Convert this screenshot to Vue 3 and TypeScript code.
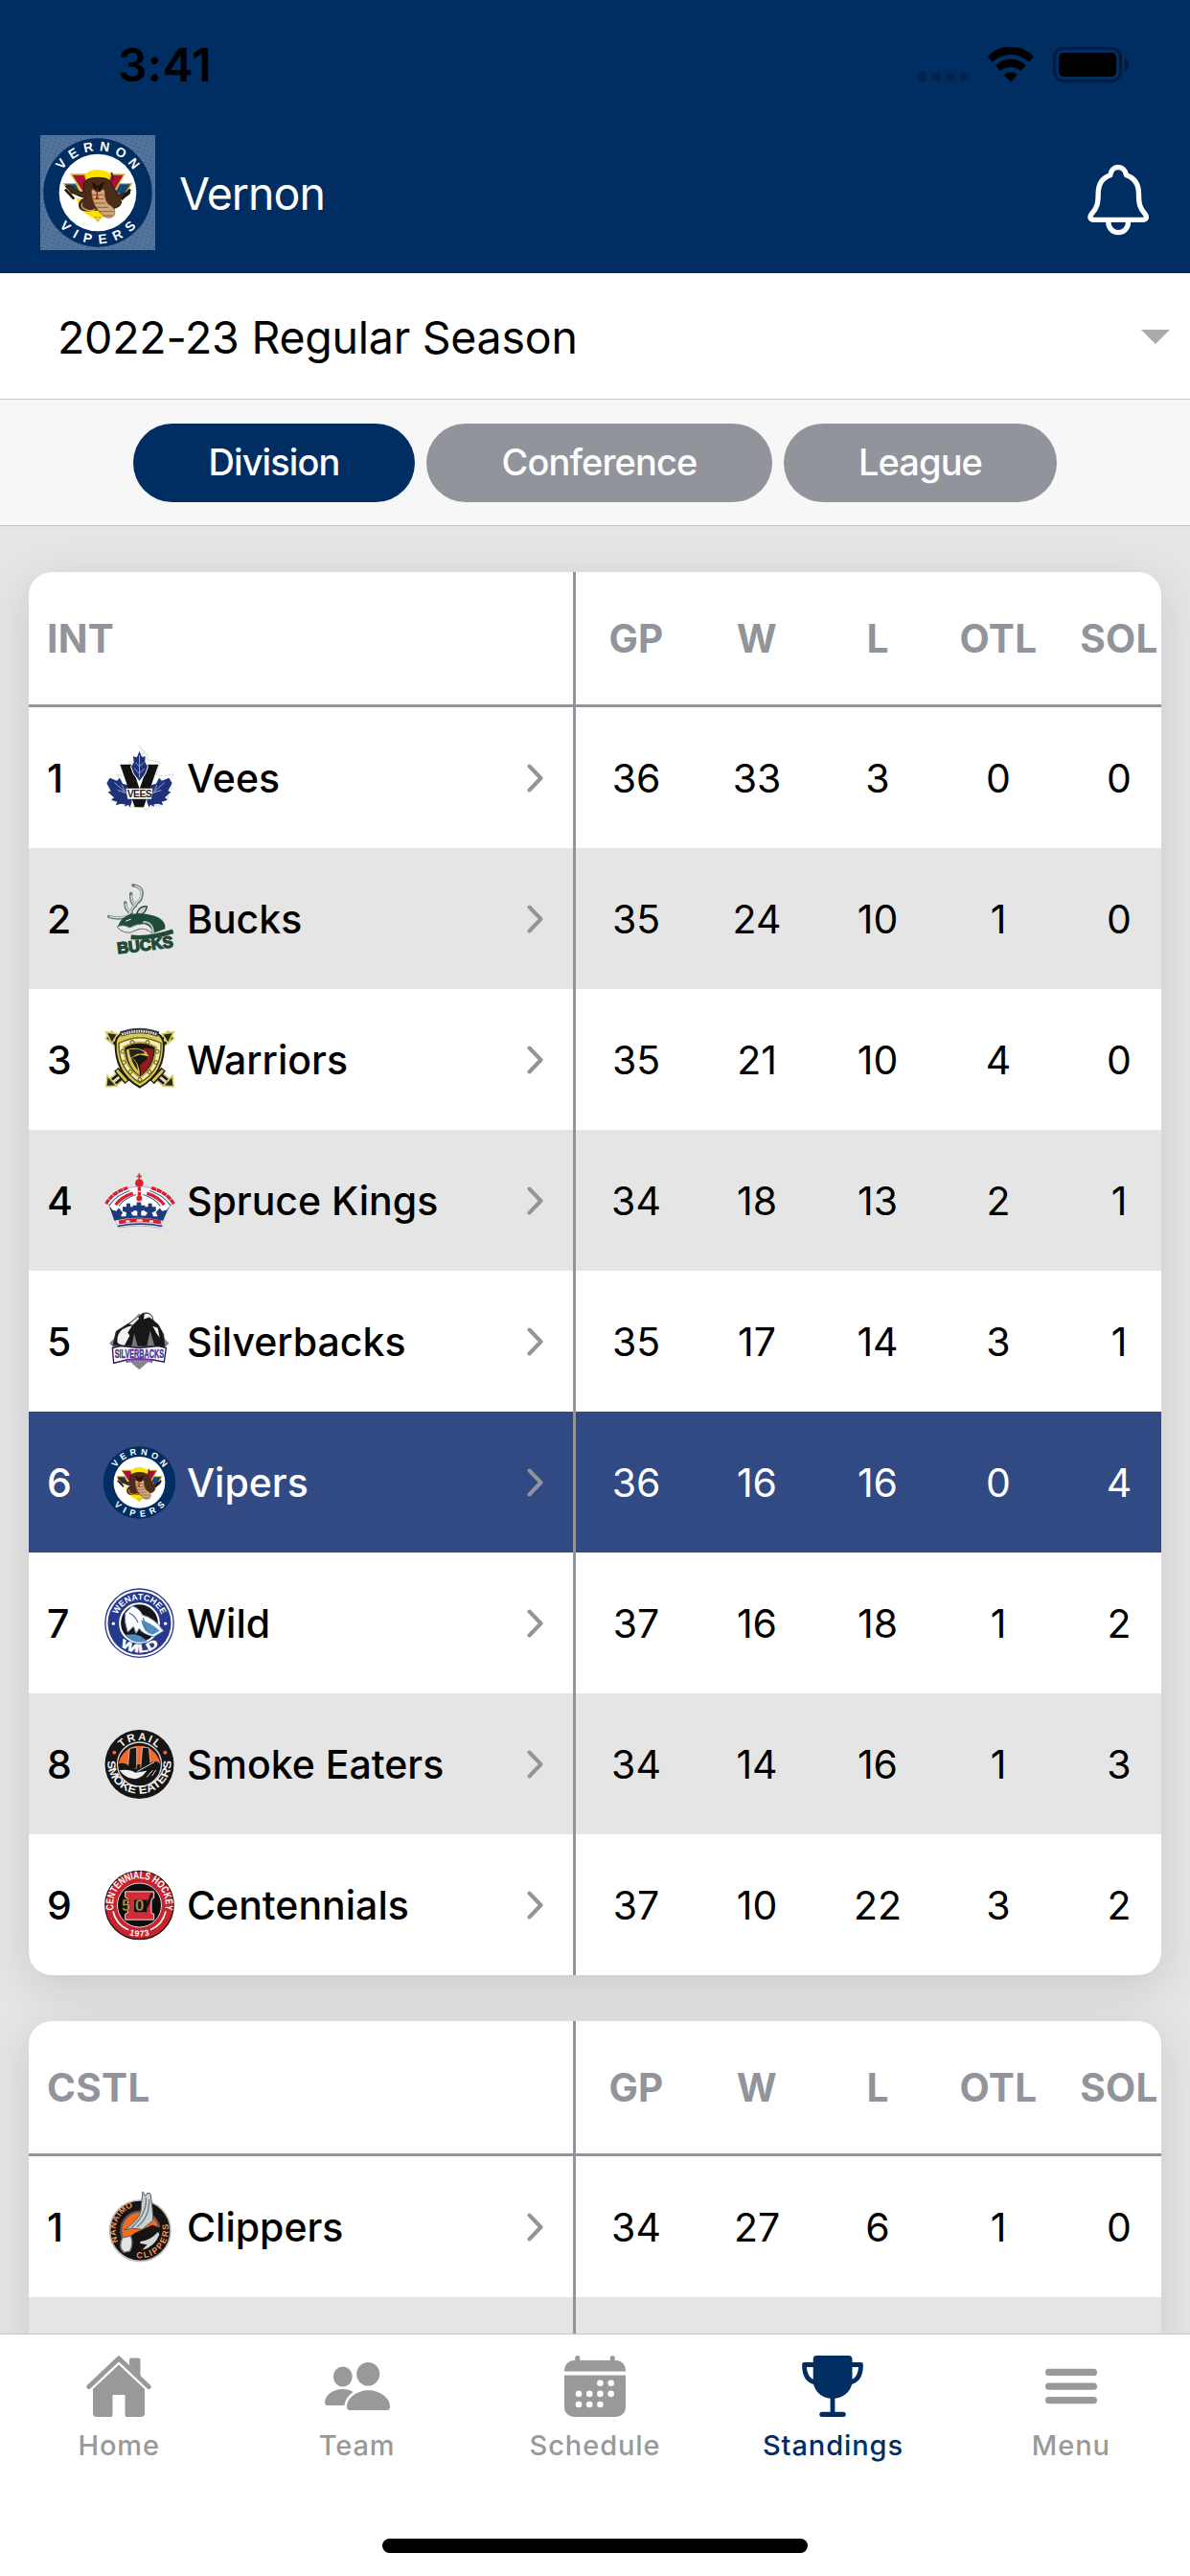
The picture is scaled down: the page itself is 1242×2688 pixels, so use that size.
<script setup lang="ts">
interface Team {
  name: string
  view: string
  stats: number[]
}
interface Division {
  code: string
  teams: Team[]
}

const columns = ['GP', 'W', 'L', 'OTL', 'SOL']
const scopes = ['Division', 'Conference', 'League']
const activeScope = 'Division'
const favourite = 'Vipers'

// `view` is the viewBox of the team's crest artwork.
const divisions: Division[] = [
  {
    code: 'INT',
    teams: [
      { name: 'Vees', view: '51 67.5 234 234', stats: [36, 33, 3, 0, 0] },
      { name: 'Bucks', view: '51 508.5 234 234', stats: [35, 24, 10, 1, 0] },
      { name: 'Warriors', view: '51 949.5 234 234', stats: [35, 21, 10, 4, 0] },
      { name: 'Spruce Kings', view: '51 130.5 234 234', stats: [34, 18, 13, 2, 1] },
      { name: 'Silverbacks', view: '51 571.5 234 234', stats: [35, 17, 14, 3, 1] },
      { name: 'Vipers', view: '43 37.8 350.8 350.8', stats: [36, 16, 16, 0, 4] },
      { name: 'Wild', view: '51 163.5 234 234', stats: [37, 16, 18, 1, 2] },
      { name: 'Smoke Eaters', view: '51 604.5 234 234', stats: [34, 14, 16, 1, 3] },
      { name: 'Centennials', view: '51 1045.5 234 234', stats: [37, 10, 22, 3, 2] },
    ],
  },
  {
    code: 'CSTL',
    teams: [{ name: 'Clippers', view: '0 0 234 234', stats: [34, 27, 6, 1, 0] }],
  },
]
const tabs = ['Home', 'Team', 'Schedule', 'Standings', 'Menu']
</script>

<template>
  <div class="screen">
    <header class="top">
      <div class="status">
        <span class="clock">3:41</span>
        <div class="status-icons">
          <svg class="signal" width="55" height="10" viewBox="0 0 55 10" fill="#00244e"><rect v-for="n in 4" :key="n" :x="(n - 1) * 15" width="10" height="10" rx="3" /></svg>
          <svg class="wifi" width="48" height="36" viewBox="395 87 144 108">
            <path d="M395 117A98 98 0 0 1 538 117L524 133A86 86 0 0 0 409 133ZM420 145A64 64 0 0 1 513 145L499 161A50 50 0 0 0 434 161ZM446 174A30 30 0 0 1 487 174L466.500 195Z" stroke="#000" stroke-width="1" stroke-linejoin="round" />
          </svg>
          <svg class="battery" width="80" height="37" viewBox="0 0 80 37">
            <rect x="1.500" y="1.500" width="69" height="34" rx="9.500" fill="none" stroke="#001b3c" stroke-width="3" />
            <rect x="6" y="6" width="60" height="25" rx="5" />
            <path d="M75 11.500q4 2 4 7t-4 7z" fill="#001b3c" />
          </svg>
        </div>
      </div>
      <div class="toolbar">
        <svg class="brand" width="120" height="120" viewBox="0 0 120 120">
          <defs>
            <pattern id="mesh" width="5" height="4" patternUnits="userSpaceOnUse" patternTransform="rotate(20)">
              <rect width="5" height="4" fill="#54749c" />
              <ellipse cx="1.500" cy="1.500" rx="1.300" ry=".8" fill="#3d5e88" />
            </pattern>
          </defs>
          <rect width="120" height="120" fill="url(#mesh)" />
          <use href="#snake" transform="translate(3.300 3.300) scale(.3335) translate(-46 -43)" />
        </svg>
        <h1 class="title">Vernon</h1>
        <svg class="bell" width="64" height="75" viewBox="704.500 451 192 225" fill="none" stroke="#fff" stroke-width="16" stroke-linejoin="round">
          <path d="M776 486C778 470 788 461.500 800 461.500S823 470 826 486C850 494 865 513 865 545C865 575 868 590 884 607C893 618 888 626 878 626H724C714 626 709 618 718 607C734 590 738 575 738 545C738 513 752 494 776 486Z" />
          <path d="M770 626V635A31 31 0 0 0 832 635V626" />
        </svg>
      </div>
    </header>

    <div class="season">
      <span>2022-23 Regular Season</span>
      <i class="caret"></i>
    </div>

    <nav class="scopes">
      <button v-for="s in scopes" :key="s" class="pill" :class="[s.toLowerCase(), { active: s === activeScope }]">{{ s }}</button>
    </nav>

    <main class="content">
      <section v-for="d in divisions" :key="d.code" class="card">
        <div class="row head">
          <div class="team">{{ d.code }}</div>
          <div v-for="c in columns" :key="c" class="cell">{{ c }}</div>
        </div>
        <div v-for="(t, i) in d.teams" :key="t.name" class="row" :class="{ odd: i % 2 === 1, fav: t.name === favourite }">
          <div class="team">
            <span class="rank">{{ i + 1 }}</span>
            <svg class="logo" width="78" height="78" :viewBox="t.view">
              <g v-if="t.name === 'Vees'">
                <path d="M166 84l12 20 14 6-2 16 40 8-10 40 18 4 36-6-14 26 8 18-16 12 6 18-26 6 4 22-24-6-24 16-24-14-28 6 4-22-24-8 6-16-18-14 8-16-16-26 36 4 14-4-12-38 40-8-4-16 14-8z" fill="#fff" stroke="#bdbdbd" stroke-width="2.500" stroke-dasharray="5 3" />
                <g id="vees-leaf" fill="#1f3178">
                  <path d="M74 184l22 9 9-9 9 18 16 4 8 26-8 36-22-3-16 4 5-10-19-6 9-8-19-17 9-4-13-24z" />
                  <path d="M126 246h18l-2 16-6 14-4-8-12 6z" />
                  <path d="M88 198l40 36M98 222l30 10M112 206l8 20" stroke="#94a0cb" stroke-width="3" />
                </g>
                <use href="#vees-leaf" transform="matrix(-1 0 0 1 333 0)" />
                <path d="M106 142h36l25 76 26-76h33l-46 133h-28z" fill="#111" />
                <path d="M166.500 97l9 20 11-3-1 20 8 14-9 24-18 23-18-23-9-24 8-12-2-22 12 4z" fill="#1f3178" stroke="#fff" stroke-width="3" />
                <path d="M166.500 112v70M166.500 148l-13-12M166.500 148l13-12M166.500 170l-16-16M166.500 170l16-16" stroke="#94a0cb" stroke-width="3" />
                <path d="M124 217h84l-4 33h-74z" fill="#fff" />
                <text class="ring" x="167" y="244" font-size="31" fill="#222" text-anchor="middle" textLength="78">VEES</text>
              </g>

              <g v-else-if="t.name === 'Bucks'">
                <g fill="none" stroke-linecap="round" stroke-linejoin="round">
                  <g id="antlers">
                    <path d="M71 618q36 10 62-2q12-30 36-50q18-40-22-46M122 574q2 28 20 32M140 546q-2 28 14 38" stroke="#5f746a" stroke-width="10" />
                    <path d="M74 618q34 8 58-4q14-30 36-50q14-36-14-42M123 578q4 22 18 26M141 552q0 20 12 30" stroke="#d3d7d5" stroke-width="5" />
                  </g>
                </g>
                <path d="M158 608q8-24 32-22q-2 18-20 26z" fill="#c8cecb" stroke="#1f4b38" stroke-width="4" />
                <path d="M98 650q10-30 42-40q52-6 88 12q22 14 19 34l-36 14q-6-26-30-22q-30 24-70 14z" fill="#1f4b38" />
                <path d="M96 650q18-10 40 2q22-12 46-12q26 8 26 32q-22-22-46-14l-24 10q-24 2-42-18z" fill="#e8eae9" stroke="#5f746a" stroke-width="3" />
                <path d="M178 634q34 0 32 40" fill="none" stroke="#c3cbc7" stroke-width="5" />
                <path d="M124 632l16-6" stroke="#fff" stroke-width="3" />
                <path d="M140 682q60 6 132-18" stroke="#1f4b38" stroke-width="14" fill="none" />
                <text class="ring heavy" x="184" y="724" font-size="50" fill="#1f4b38" stroke="#1f4b38" stroke-width="4" text-anchor="middle" textLength="176" lengthAdjust="spacingAndGlyphs" transform="rotate(-7 184 706)">BUCKS</text>
              </g>

              <g v-else-if="t.name === 'Warriors'">
                <g fill="none">
                  <path d="M68 986l182 150M268 986L84 1136" stroke="#d8ce66" stroke-width="34" />
                  <path d="M72 990l178 146M264 990L84 1136" stroke="#1c1a12" stroke-width="24" />
                  <path d="M78 994l172 142M258 994L84 1136" stroke="#d9d9d2" stroke-width="9" />
                  <path d="M94 1096l34 40M242 1096l-36 40" stroke="#1c1a12" stroke-width="18" />
                  <path d="M96 1099l30 34M240 1099l-32 34" stroke="#d8c850" stroke-width="9" />
                </g>
                <path d="M62 979l36 6-18 30zM274 979l-36 6 18 30zM62 1150l4-34 30 32zM274 1150l-4-34-30 32z" fill="#2c2918" stroke="#d8ce66" stroke-width="5" />
                <path d="M92 1010q6-26 34-32q42-12 84 0q26 8 32 32q8 96-74 142q-80-44-76-142z" fill="#d9ca55" stroke="#1c1a12" stroke-width="6" />
                <path d="M102 1014q66-34 132 0q4 84-66 124q-68-42-66-124z" fill="#f4efb6" stroke="#5d531b" stroke-width="4" />
                <path d="M118 1026q50-28 100 0q0 64-50 96q-50-34-50-96z" fill="#191712" stroke="#b7a741" stroke-width="6" />
                <path d="M178 1030l34 2q-2 52-40 84l-4-34 24-20z" fill="#8c1c1f" />
                <path d="M126 1034q34-12 62 8l8 14-28-6-26 10q24 10 26 56q-40-30-42-82z" fill="#d8c24b" />
                <path d="M134 1034q40-6 50 12l-24 2-20 12q20 10 22 40q-24-30-28-66z" fill="#222" />
                <path d="M108 986q58-22 118 0" stroke="#3a3a38" stroke-width="17" fill="none" />
                <path d="M112 987q56-20 110 0" stroke="#dcdcdc" stroke-width="8" stroke-dasharray="5 2.500" fill="none" />
                <g fill="#e9dc72" stroke="#5d531b" stroke-width="3">
                  <circle cx="114" cy="1040" r="6" /><circle cx="222" cy="1040" r="6" /><circle cx="118" cy="1074" r="6" /><circle cx="218" cy="1074" r="6" /><circle cx="138" cy="1104" r="6" /><circle cx="198" cy="1104" r="6" /><circle cx="144" cy="1011" r="6" /><circle cx="192" cy="1011" r="6" /><circle cx="168" cy="1128" r="6" />
                </g>
              </g>

              <g v-else-if="t.name === 'Spruce Kings'">
                <path d="M66 254q30-34 72-48l28-4 30 4q44 14 72 48q-14 20-30 62l-8 16q-64-12-128 0l-8-16q-12-42-28-62z" fill="#fff" stroke="#9db2d2" stroke-width="3" />
                <g fill="none" stroke="#d9202d" stroke-width="10">
                  <path d="M62 257q20-36 68-50M274 257q-20-36-72-50" stroke-dasharray="16 2" />
                  <path d="M92 260q18-24 54-36M244 260q-18-24-54-36" />
                  <path d="M102 315q64-14 132 0" stroke-width="13" />
                </g>
                <path d="M156 228q-38 12-54 36M178 228q38 12 54 36M72 262q24-34 64-46M264 262q-24-34-66-46" stroke="#3c5c99" stroke-width="3.500" fill="none" />
                <path d="M72 264l10 12 12 4 8-10 12 14-6 12h16l2-12-12-4v-14h12v-10h12v10h12v14l-10 4 6 10h14v-14l-14-4v-14h12v-10h14v10h12v14l-12 4v14h14l6-10-10-4v-14h12v-10h12v10h12v14l-12 4 4 12h14l-6-12 12-14 8 10 14-4 8-12-20 46q-76-18-152 0z" fill="#1d3a7c" />
                <path d="M98 327q70-14 140 0" stroke="#1d3a7c" stroke-width="5" fill="none" />
                <path d="M124 312h12M158 309h18M198 312h12" stroke="#fff" stroke-width="6" />
                <circle cx="166" cy="192" r="13" fill="#d9202d" />
                <path d="M166 162v18M158 171h16" stroke="#d9202d" stroke-width="5" />
                <path d="M166 205v44" stroke="#d9202d" stroke-width="10" stroke-dasharray="12 3" />
                <circle cx="166" cy="240" r="9" fill="#d9202d" />
              </g>

              <g v-else-if="t.name === 'Silverbacks'">
                <path d="M166 600l94 94-94 82-94-82z" fill="#85858a" />
                <path d="M84 700l10-44 38-24 30-18 14-14q30-8 34 22l16 14 16 30 4 38z" fill="#17171a" stroke="#303034" stroke-width="3" />
                <path d="M98 692q-6-44 46-54l-14 22 6 10-16 30-12-2zM134 634l12 2 20-20-4-4zM182 602q22-6 26 18l-10-8-18 6zM208 640l16 6 6 30-10-14z" fill="#f2f2f2" />
                <path d="M150 662l-8 44h20zM200 654l-10 48h24z" fill="#77777c" />
                <path d="M82 708l26-6 58 6 60-6 24 6-6 44-42-8-36 2-34-2-46 12z" fill="#fff" stroke="#2b1744" stroke-width="4" />
                <text class="ring heavy" x="166" y="739" font-size="40" fill="#50328c" stroke="#50328c" stroke-width="1.500" text-anchor="middle" textLength="154" lengthAdjust="spacingAndGlyphs">SILVERBACKS</text>
                <path d="M124 750q42-12 84 0" stroke="#6b43a8" stroke-width="10" fill="none" />
                <path d="M130 749h74" stroke="#d9cced" stroke-width="2.500" stroke-dasharray="4 3" />
              </g>

              <g v-else-if="t.name === 'Vipers'" id="snake">
                <circle cx="216" cy="213" r="170" fill="#002d62" />
                <circle cx="216" cy="213" r="121" fill="#fff" />
                <path d="M150 232h132q-8 44-66 66q-56-18-66-66z" fill="#fde100" />
                <path d="M168 160q46-38 96 0v40h-96z" fill="#fde100" />
                <path d="M133 156h42l12 40-10 28zM299 156h-42l-10 40 12 28z" fill="#a8123a" stroke="#d9b92c" stroke-width="4" />
                <path d="M110 185h38l16 30-32 4zM322 185h-38l-16 30 32 4z" fill="#12467d" stroke="#d9b92c" stroke-width="4" />
                <path d="M262 176q4-16-4-26" stroke="#3a2212" stroke-width="5" fill="none" />
                <path d="M172 190q4-24 44-24t44 22q10 16 20 32l36-10q6 8-30 24q10 14-8 24q-14 8-34 8l-40 2q-50 8-46-18q2-16 20-20q-36-8-62-36l14-2q26 24 44 18q-4-12-2-20z" fill="#4a2c17" stroke="#2b190c" stroke-width="3" />
                <path d="M196 206q20-16 42 0q-2 40 22 50q16 14 6 30q-14 12-32 0q-36-28-38-80z" fill="#d2a679" stroke="#6e472a" stroke-width="2" />
                <path d="M198 220h37M200 233h36M204 246h36M211 259h38M220 272h45M234 285h28" stroke="#7d5636" stroke-width="2.500" />
                <path d="M196 178l20 14 20-14-8 28q-12 10-22 0z" fill="#241208" />
                <path d="M214 200v26l-4 8M214 226l4 8" stroke="#b3122d" stroke-width="4" fill="none" />
                <path d="M114 203l28 30M318 203l-28 32" stroke="#1d130b" stroke-width="8" />
                <path d="M168 246q-8 12 10 20t30-2" stroke="#d2a679" stroke-width="4" fill="none" />
                <path d="M206 290h20l-10 14z" fill="#fde100" stroke="#a88a10" stroke-width="2" />
                <path id="arc-top" d="M85 213a131 131 0 0 1 262 0" fill="none" />
                <path id="arc-bottom" d="M56 213a160 160 0 0 0 320 0" fill="none" />
                <text class="ring" font-size="41" fill="#fff" text-anchor="middle"><textPath href="#arc-top" startOffset="50%" textLength="264">VERNON</textPath></text>
                <text class="ring" font-size="41" fill="#fff" text-anchor="middle"><textPath href="#arc-bottom" startOffset="50%" textLength="272">VIPERS</textPath></text>
              </g>

              <g v-else-if="t.name === 'Wild'">
                <circle cx="166.500" cy="279.500" r="107" fill="#fff" stroke="#27398c" stroke-width="4" />
                <circle cx="166.500" cy="279.500" r="99" fill="#27398c" />
                <circle cx="166.500" cy="279.500" r="61" fill="#15151a" stroke="#fff" stroke-width="6" />
                <path d="M122 248l22-22q24 8 32 28q36 8 66 50l-30 18q-40-10-46-26l-10 16-8-22-18 18q-12-32-8-60z" fill="#fff" stroke="#6987c0" stroke-width="3" />
                <path d="M172 270q28 6 58 34l-22 12q-30-6-36-46zM124 316q20 34 68 20l-22-16-20-6z" fill="#4f8cc0" />
                <path d="M134 248q20 8 28 30M178 262l10 42" stroke="#5b79b8" stroke-width="4" fill="none" />
                <path id="wild-top" d="M93 280a73.500 73.500 0 0 1 147 0" fill="none" />
                <path id="wild-bot" d="M76 280a91 91 0 0 0 182 0" fill="none" />
                <text class="ring heavy" font-size="27" fill="#fff" text-anchor="middle"><textPath href="#wild-top" startOffset="50%" textLength="176">WENATCHEE</textPath></text>
                <text class="ring heavy" font-size="36" fill="#fff" stroke="#fff" stroke-width="1.500" text-anchor="middle"><textPath href="#wild-bot" startOffset="50%" textLength="130" lengthAdjust="spacingAndGlyphs">WILD</textPath></text>
                <circle cx="85" cy="281" r="5" fill="#fff" /><circle cx="248" cy="281" r="5" fill="#fff" />
              </g>

              <g v-else-if="t.name === 'Smoke Eaters'">
                <circle cx="166.500" cy="721.500" r="108" fill="#151515" />
                <circle cx="166.500" cy="721.500" r="69" fill="#151515" stroke="#d8d8d8" stroke-width="4" />
                <path d="M101 722a66 66 0 0 1 131 0z" fill="#f26a2e" />
                <path d="M136 672l22-4v68h-28zM176 668l20 2 6 60-32 8z" fill="#151515" stroke="#f7d9c9" stroke-width="2" />
                <path d="M100 720q22-8 34 10l20 6 26-4 22-16q18-8 29 4q-6 54-64 68q-56-10-67-68z" fill="#151515" />
                <path d="M104 740q34-4 50 8l36-6-12 14q-18 14-34 10-24-4-40-26z" fill="#efefef" />
                <path d="M160 744l54-30M190 762l18-22M206 758l12-18" fill="none" stroke="#e5e5e5" stroke-width="3" />
                <path id="smoke-top" d="M91 722a75.500 75.500 0 0 1 151 0" fill="none" />
                <path id="smoke-bot" d="M67 706v8a99.500 99.500 0 0 0 199 0v-8" fill="none" />
                <text class="ring heavy" font-size="34" fill="#f2f2f2" text-anchor="middle"><textPath href="#smoke-top" startOffset="50%" textLength="124">TRAIL</textPath></text>
                <text class="ring heavy" font-size="35" fill="#f2f2f2" text-anchor="middle"><textPath href="#smoke-bot" startOffset="50%" textLength="318" lengthAdjust="spacingAndGlyphs">SMOKE EATERS</textPath></text>
                <circle cx="88" cy="685" r="6" fill="#f26a2e" /><circle cx="247" cy="685" r="6" fill="#f26a2e" />
              </g>

              <g v-else-if="t.name === 'Centennials'">
                <circle cx="166.500" cy="1162.500" r="107" fill="#c8242f" stroke="#2a1112" stroke-width="4" />
                <circle cx="166.500" cy="1162.500" r="69" fill="#0c0c0c" stroke="#f0d5d5" stroke-width="3" />
                <path d="M84 1182a84 84 0 0 0 48 58M249 1182a84 84 0 0 1-48 58" fill="none" stroke="#fff" stroke-width="5" />
                <path d="M122 1120h90v20l-8 6v42l8 2v18h-90v-18l8-4v-44l-8-4z" fill="#d22c38" stroke="#f7dada" stroke-width="3" />
                <path d="M150 1146h40v38h-40z" fill="#0c0c0c" />
                <path d="M206 1126l-16 40h-28" stroke="#111" stroke-width="8" fill="none" />
                <text class="ring heavy" x="146" y="1181" font-size="50" fill="#c0974d" stroke="#3e2c10" stroke-width="1.500" text-anchor="middle" textLength="70">50</text>
                <path id="cents-top" d="M89 1188a82 82 0 1 1 155 0" fill="none" />
                <path id="cents-bot" d="M68 1162a98 98 0 0 0 197 0" fill="none" />
                <text class="ring" font-size="33" fill="#fff" text-anchor="middle"><textPath href="#cents-top" startOffset="50%" textLength="290" lengthAdjust="spacingAndGlyphs">CENTENNIALS HOCKEY</textPath></text>
                <text class="ring" font-size="26" fill="#fff" text-anchor="middle"><textPath href="#cents-bot" startOffset="50%" textLength="66">1973</textPath></text>
              </g>

              <g v-else>
                <circle cx="118" cy="128" r="95" fill="#161311" stroke="#b9bcbd" stroke-width="5" />
                <circle cx="118" cy="128" r="60" fill="#f26a21" stroke="#565b5e" stroke-width="7" />
                <path d="M66 164l34-28 56-26 28 10-6 46-32 24-50 4z" fill="#161311" />
                <path d="M126 6l8 14 6-10 10 2q8 50 8 84l-34 28-34-4-22 6q46-30 52-60 2-30 6-60z" fill="#c9d1d2" stroke="#555b5c" stroke-width="3" />
                <path d="M136 24q4 50-44 94M146 30q2 56-38 86" stroke="#6f7c7f" stroke-width="4" fill="none" />
                <path d="M62 150l26-6q10 22-2 48l-18 4q-20-12-6-46z" fill="#e2e4e4" stroke="#707476" stroke-width="4" />
                <path d="M118 162q30-2 56-30l4 8q-16 40-54 48l16-16-22-4z" fill="#d4d7d8" />
                <path id="clip-top" d="M49 162a77 77 0 0 1 71-111" fill="none" />
                <path id="clip-bot" d="M106 213a88 88 0 0 0 88-132" fill="none" />
                <text class="ring heavy" font-size="27" fill="#ee9357"><textPath href="#clip-top" textLength="134">NANAIMO</textPath></text>
                <text class="ring heavy" font-size="27" fill="#ee9357"><textPath href="#clip-bot" textLength="170">CLIPPERS</textPath></text>
              </g>
            </svg>
            <span class="name">{{ t.name }}</span>
            <svg class="chevron" width="18" height="30" viewBox="0 0 18 30"><path d="M2.500 2.500L14.500 15L2.500 27.500" /></svg>
          </div>
          <div v-for="(v, k) in t.stats" :key="k" class="cell">{{ v }}</div>
        </div>
        <div v-if="d.code === 'CSTL'" class="row odd"><div class="team"></div></div>
      </section>
    </main>

    <footer class="tabbar">
      <div class="tabs">
        <div v-for="t in tabs" :key="t" class="tab" :class="{ current: t === 'Standings' }">
          <svg v-if="t === 'Home'" width="68" height="64" viewBox="0 0 68 64">
            <path d="M2.800 32.500L34 3L65.200 32.500" fill="none" stroke="currentColor" stroke-width="5" stroke-linecap="round" stroke-linejoin="round" />
            <path d="M45 10V4.500a2 2 0 0 1 2-2h7.500a2 2 0 0 1 2 2V22z" />
            <path d="M34 9.500L61 35V60a4 4 0 0 1-4 4H42.500a2 2 0 0 1-2-2V41H27.500V62a2 2 0 0 1-2 2H11a4 4 0 0 1-4-4V35z" />
          </svg>
          <svg v-else-if="t === 'Team'" width="68" height="64" viewBox="0 0 68 64">
            <ellipse cx="18.800" cy="22" rx="9.900" ry="10.500" /><ellipse cx="45.200" cy="19.300" rx="12" ry="12.300" />
            <path d="M19 35c4 0 8 1.200 10.500 3C24.500 41.500 21 46.500 20.500 52H3c-2 0-3-1-3-3 0-8 9-14 19-14z" />
            <path d="M45.500 36.300c12 0 22.500 8 22.500 17 0 2.500-1 3.700-3 3.700H26c-2 0-3-1.200-3-3.700 0-9 10.500-17 22.500-17z" />
          </svg>
          <svg v-else-if="t === 'Schedule'" width="64" height="64" viewBox="0 0 64 64">
            <path d="M11.200 5V2.500a2.500 2.500 0 0 1 5 0V5H47.800V2.500a2.500 2.500 0 0 1 5 0V5H54a10 10 0 0 1 10 10v1.500H0V15A10 10 0 0 1 10 5z" />
            <path d="M0 20.500H64V54a10 10 0 0 1-10 10H10A10 10 0 0 1 0 54z" />
            <g fill="#fff"><circle cx="37.400" cy="28.700" r="3.300" /><circle cx="48.700" cy="28.700" r="3.300" /><circle cx="15" cy="39.900" r="3.300" /><circle cx="26.200" cy="39.900" r="3.300" /><circle cx="37.400" cy="39.900" r="3.300" /><circle cx="48.700" cy="39.900" r="3.300" /><circle cx="15" cy="51" r="3.300" /><circle cx="26.200" cy="51" r="3.300" /><circle cx="37.400" cy="51" r="3.300" /></g>
          </svg>
          <svg v-else-if="t === 'Standings'" width="64" height="64" viewBox="0 0 64 64">
            <path d="M15.500 0h33a4 4 0 0 1 4 4V26C52.500 37 43 44.800 32 44.800S11.700 37 11.700 26V4a4 4 0 0 1 3.800-4z" />
            <path d="M13 9.500H2.500C2.500 20 6 26.500 14 28M51 9.500h10.500C61.500 20 58 26.500 50 28M32 44v16" fill="none" stroke="currentColor" stroke-width="4.800" stroke-linejoin="round" />
            <rect x="18.300" y="58.700" width="27.400" height="5.300" rx="2.500" />
          </svg>
          <svg v-else width="54" height="64" viewBox="0 0 54 64"><rect y="13.700" width="54" height="7.200" rx="3.500" /><rect y="28.500" width="54" height="7.200" rx="3.500" /><rect y="43" width="54" height="7.200" rx="3.500" /></svg>
          <span class="label">{{ t }}</span>
        </div>
      </div>
      <div class="indicator"></div>
    </footer>
  </div>
</template>

<style>
body {
  margin: 0;
}
</style>

<style scoped>
.screen {
  width: 1242px;
  height: 2688px;
  display: flex;
  flex-direction: column;
  overflow: hidden;
  background: #e5e5e5;
  font-family: Inter, 'Liberation Sans', sans-serif;
  color: #000;
}
.ring {
  font-family: 'Liberation Sans', sans-serif;
  font-weight: 700;
}
.heavy {
  font-weight: 900;
}
.top {
  height: 284px;
  flex: none;
  background: #002d62;
  border-bottom: 1px solid #00244e;
}
.status {
  height: 135px;
  box-sizing: border-box;
  padding: 0 63px 0 123px;
  display: flex;
  align-items: center;
  justify-content: space-between;
}
.clock {
  font-size: 48px;
  font-weight: 600;
  letter-spacing: 0.3px;
}
.status-icons {
  display: flex;
  align-items: flex-end;
  height: 37px;
}
.signal {
  margin-bottom: 1px;
}
.wifi {
  margin: 0 20px 1px 19px;
}
.toolbar {
  height: 149px;
  display: flex;
  align-items: flex-start;
  padding: 6px 43px 0 42px;
}
.brand {
  display: block;
}
.title {
  margin: 33px 0 0 25px;
  font-size: 46.500px;
  line-height: 56px;
  font-weight: 400;
  letter-spacing: -1px;
  color: #fff;
}
.bell {
  margin: 30px 0 0 auto;
}
.season {
  height: 132px;
  flex: none;
  box-sizing: border-box;
  background: #fff;
  border-bottom: 1px solid #c8c8c8;
  display: flex;
  align-items: center;
  justify-content: space-between;
  padding: 2px 21px 0 60px;
  font-size: 46.500px;
  letter-spacing: -0.25px;
}
.caret {
  border: 15px solid transparent;
  border-top-color: #aaa;
  border-bottom: 0;
}
.scopes {
  height: 132px;
  box-sizing: border-box;
  flex: none;
  background: #f7f7f7;
  border-bottom: 1px solid #c8c8c8;
  display: flex;
  justify-content: center;
  align-items: center;
  gap: 12px;
}
.pill {
  height: 82px;
  padding: 0;
  border: 0;
  border-radius: 41px;
  background: #92949c;
  color: #fff;
  font: 500 38px/81px Inter, 'Liberation Sans', sans-serif;
  letter-spacing: -0.9px;
}
.pill.active {
  background: #002d62;
}
.pill.division {
  width: 294px;
}
.pill.conference {
  width: 361px;
}
.pill.league {
  width: 285px;
}
.content {
  flex: 1;
  min-height: 0;
  overflow: hidden;
  padding: 48px 30px 0;
}
.card {
  border-radius: 24px;
  background: #fff;
  box-shadow: 0 12px 48px rgba(0, 0, 0, 0.12);
  overflow: hidden;
  margin-bottom: 48px;
}
.row {
  display: flex;
  height: 147px;
  font-size: 41px;
}
.row.odd {
  background: #e5e5e5;
}
.row.fav {
  background: #314a83;
  color: #fff;
}
.row.head {
  height: 138px;
  border-bottom: 3px solid #92949c;
  font-weight: 700;
  font-size: 40.500px;
  letter-spacing: 0.3px;
  color: #92949c;
}
.team {
  flex: none;
  width: 571px;
  box-sizing: border-box;
  padding: 0 30px 0 19px;
  border-right: 3px solid #92949c;
  display: flex;
  align-items: center;
  font-weight: 500;
}
.head .team {
  font-weight: 700;
}
.rank {
  width: 58px;
}
.logo {
  flex: none;
}
.name {
  margin-left: 10px;
  white-space: nowrap;
}
.chevron {
  margin-left: auto;
  fill: none;
  stroke: #92949c;
  stroke-width: 4;
  stroke-linecap: round;
  stroke-linejoin: round;
}
.cell {
  flex: none;
  width: 126px;
  display: flex;
  align-items: center;
  justify-content: center;
}
.tabbar {
  height: 253px;
  box-sizing: border-box;
  flex: none;
  background: #fff;
  border-top: 1px solid #c8c8c8;
  display: flex;
  flex-direction: column;
  align-items: center;
}
.tabs {
  width: 100%;
  height: 213px;
  display: flex;
}
.tab {
  flex: 1;
  display: flex;
  flex-direction: column;
  align-items: center;
  padding-top: 22px;
  color: #999;
}
.tab svg {
  fill: currentColor;
}
.tab.current {
  color: #002d62;
}
.label {
  margin-top: 11px;
  font-size: 29px;
  line-height: 37px;
  font-weight: 450;
  letter-spacing: 0.9px;
}
.indicator {
  width: 444px;
  height: 15px;
  border-radius: 8px;
  background: #000;
}
</style>
